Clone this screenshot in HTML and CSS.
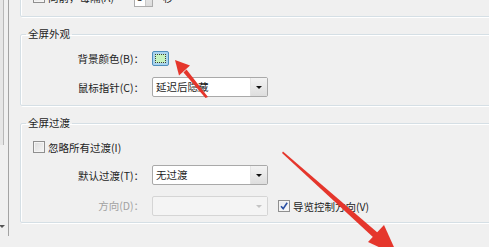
FILE: index.html
```html
<!DOCTYPE html>
<html lang="zh-CN">
<head>
<meta charset="utf-8">
<title>全屏</title>
<link rel="stylesheet" href="styles.css">
</head>
<body>
<div class="window">
  <div class="sidebar">
    <div class="thumb"></div>
    <span class="scroll-down"></span>
  </div>
  <div class="panel">
    <div class="group group-top">
      <div class="top-row">
        <span class="checkbox"></span>
        <span class="check-label">向前，每隔(A)</span>
        <span class="spin"><span class="spin-value">5</span><span class="spin-btns"></span></span>
        <span class="unit">秒</span>
      </div>
    </div>

    <fieldset class="group box">
      <legend>全屏外观</legend>
      <div class="form">
        <span class="label">背景颜色(B)：</span>
        <div class="control"><span class="swatch"><span class="swatch-fill"></span></span></div>
        <span class="label">鼠标指针(C)：</span>
        <div class="control"><span class="select"><span class="select-text">延迟后隐藏</span><span class="select-btn"><i class="caret"></i></span></span></div>
      </div>
    </fieldset>

    <fieldset class="group box box-transitions">
      <legend>全屏过渡</legend>
      <div class="form">
        <div class="full-row">
          <span class="checkbox"></span>
          <span class="check-label">忽略所有过渡(I)</span>
        </div>
        <span class="label">默认过渡(T)：</span>
        <div class="control"><span class="select"><span class="select-text">无过渡</span><span class="select-btn"><i class="caret"></i></span></span></div>
        <span class="label disabled">方向(D)：</span>
        <div class="control">
          <span class="select select-disabled"><span class="select-text"></span><span class="select-btn"><i class="caret"></i></span></span>
          <span class="checkbox checked"><svg viewBox="0 0 10 10" width="10" height="10"><path d="M2 5.2 L4.2 7.6 L8.2 1.8" fill="none" stroke="#2a4fa3" stroke-width="1.6"/></svg></span>
          <span class="check-label">导览控制方向(V)</span>
        </div>
      </div>
    </fieldset>
  </div>
</div>

<svg class="annotations" width="489" height="247" viewBox="0 0 489 247">
  <polygon points="208,97 205.5,98 183.5,72.5 186.5,69.5" fill="#e5362c"/>
  <polygon points="175,60 190,65.5 179,75.5" fill="#e5362c"/>
  <polygon points="283,151.5 282,153 374,238 378,233" fill="#e5362c"/>
  <polygon points="398,256 368,242 384,225" fill="#e5362c"/>
</svg>
</body>
</html>
```

FILE: styles.css
```css
html, body {
  margin: 0;
  padding: 0;
}

body {
  width: 489px;
  height: 247px;
  overflow: hidden;
  background: #f0f0f0;
  font-family: "Noto Sans CJK SC", "Noto Sans", sans-serif;
  font-size: 10.5px;
  color: #1e1e1e;
  position: relative;
}

.window {
  display: flex;
  align-items: flex-start;
}

.sidebar {
  position: relative;
  flex: 0 0 8px;
  height: 236px;
  border-right: 1px solid #a3a3a3;
}

.thumb {
  width: 3px;
  height: 145px;
  background: #e6e6e6;
  border-right: 1px solid #b8b8b8;
}

.scroll-down {
  position: absolute;
  left: -1px;
  top: 225px;
  width: 0;
  height: 0;
  border-left: 3px solid transparent;
  border-right: 3px solid transparent;
  border-top: 3px solid #555;
}

.panel {
  flex: 1;
  padding-left: 11px;
  margin-right: -30px;
}

.group {
  border: 1px solid #d5dfe5;
  box-shadow: inset 1px 1px 0 #fff, 1px 1px 0 #fff;
  border-radius: 2px;
}

.group-top {
  border-top: none;
  margin-top: -20px;
  padding: 7px 0 9px 12px;
}

.top-row {
  display: flex;
  align-items: center;
  height: 20px;
}

.top-row .check-label {
  width: 86px;
}

.spin {
  display: flex;
  width: 19px;
  height: 20px;
  box-sizing: border-box;
  border: 1px solid #acacac;
  background: #fff;
}

.spin-value {
  flex: 1;
  padding-left: 2px;
  line-height: 18px;
}

.spin-btns {
  width: 6px;
  background: linear-gradient(#f2f2f2, #dcdcdc);
  border-left: 1px solid #c8c8c8;
}

.unit {
  margin-left: 10px;
}

.box {
  margin: 10px 0 0 0;
  padding: 7px 0 8px 0;
  min-width: 0;
}

.box legend {
  margin-left: 5px;
  padding: 0 2px;
  line-height: 14px;
  font-size: 10.5px;
}

.box-transitions {
  padding-top: 10px;
  padding-bottom: 6px;
}

.form {
  display: grid;
  grid-template-columns: 123px auto;
  column-gap: 8px;
  row-gap: 9px;
  align-items: center;
}

.box-transitions .form {
  row-gap: 11px;
}

.box-transitions .form .label:last-of-type {
  margin-top: -1px;
}

.label {
  text-align: right;
  white-space: nowrap;
}

.label.disabled {
  color: #a2a2a2;
}

.control {
  display: flex;
  align-items: center;
  min-height: 20px;
}

.full-row {
  grid-column: 1 / -1;
  display: flex;
  align-items: center;
  height: 14px;
  padding-left: 12px;
}

.checkbox {
  display: inline-flex;
  align-items: center;
  justify-content: center;
  flex: 0 0 auto;
  width: 12px;
  height: 12px;
  box-sizing: border-box;
  border: 1px solid #8f8f8f;
  background: linear-gradient(135deg, #dcdcdc, #f6f6f6);
  box-shadow: inset 0 0 0 1px #f4f4f4;
  margin-right: 3px;
}

.checkbox.checked {
  background: linear-gradient(135deg, #e4e8ee, #fbfbfb);
  margin-left: 10px;
}

.check-label {
  white-space: nowrap;
}

.swatch {
  display: flex;
  width: 17px;
  height: 15px;
  box-sizing: border-box;
  border: 1px solid #4f8fbd;
  border-radius: 2px;
  background: #a9d4ef;
  padding: 2px;
}

.swatch-fill {
  flex: 1;
  border: 1px dotted #3a3a3a;
  background: #c5f3bf;
}

.select {
  display: flex;
  width: 116px;
  height: 20px;
  box-sizing: border-box;
  border: 1px solid #a9a9a9;
  border-radius: 2px;
  background: #fff;
}

.select-text {
  flex: 1;
  padding-left: 3px;
  line-height: 18px;
}

.select-btn {
  display: flex;
  align-items: center;
  justify-content: center;
  width: 16px;
  background: linear-gradient(#f3f3f3, #dedede);
  border-left: 1px solid #e4e4e4;
}

.caret {
  width: 0;
  height: 0;
  border-left: 3px solid transparent;
  border-right: 3px solid transparent;
  border-top: 3px solid #111;
}

.select-disabled {
  border-color: #d5d5d5;
  background: #f4f4f4;
}

.select-disabled .select-btn {
  background: #f4f4f4;
  border-left-color: #f4f4f4;
}

.select-disabled .caret {
  border-top-color: #c4c4c4;
}

.annotations {
  position: absolute;
  left: 0;
  top: 0;
  pointer-events: none;
}
```
